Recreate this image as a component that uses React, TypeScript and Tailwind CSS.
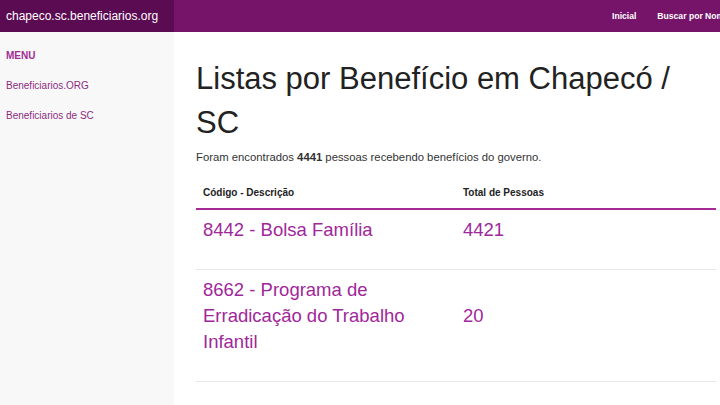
import React from "react";

const rows = [
  { label: "8442 - Bolsa Família", total: "4421" },
  { label: "8662 - Programa de Erradicação do Trabalho Infantil", total: "20" },
];

const App: React.FC = () => (
  <div className="h-[405px] w-[720px] overflow-hidden bg-white font-['Liberation_Sans',Arial,sans-serif]">
    <header className="flex h-8 bg-[#76146a] text-white">
      <div className="flex w-[174px] shrink-0 items-center bg-[#5b0b52] pl-[6px] text-[12px]">
        chapeco.sc.beneficiarios.org
      </div>
      <nav className="flex flex-1 items-center gap-[21px] overflow-hidden whitespace-nowrap pl-[438px] text-[8.6px] font-bold">
        <a>Inicial</a>
        <a>Buscar por Nome</a>
      </nav>
    </header>

    <div className="flex h-[373px]">
      <aside className="w-[174px] shrink-0 bg-[#f8f8f8] pl-[6px] pt-[18px] text-[10px]">
        <h3 className="h-[12px] font-bold leading-[12px] text-[#a12c94]">MENU</h3>
        <ul className="mt-[18px] flex flex-col gap-[18px] text-[#8d2c7f]">
          <li className="leading-[12px]">Beneficiarios.ORG</li>
          <li className="leading-[12px]">Beneficiarios de SC</li>
        </ul>
      </aside>

      <main className="w-[520px] pl-[22px] pt-[25px]">
        <h1 className="text-[31px] leading-[44px] text-[#222]">
          Listas por Benefício em Chapecó / SC
        </h1>
        <p className="mt-[5px] text-[11.3px] leading-[14px] text-[#333]">
          Foram encontrados <b>4441</b> pessoas recebendo benefícios do governo.
        </p>
        <table className="mt-[23px] w-[520px] table-fixed border-collapse">
          <thead>
            <tr className="border-b-2 border-[#a52a98] text-left text-[10px] font-bold text-[#222]">
              <th className="w-[260px] px-[7px] pb-[9px] pt-0 leading-[12px]">Código - Descrição</th>
              <th className="px-[7px] pb-[9px] pt-0 leading-[12px]">Total de Pessoas</th>
            </tr>
          </thead>
          <tbody>
            {rows.map((r) => (
              <tr key={r.total} className="border-b border-[#e8e8e8] text-[18.5px] leading-[26px] text-[#a0279a]">
                <td className="px-[7px] pb-[26px] pt-[7px] align-middle">{r.label}</td>
                <td className="px-[7px] pb-[26px] pt-[7px] align-middle">{r.total}</td>
              </tr>
            ))}
          </tbody>
        </table>
      </main>
    </div>
  </div>
);

export default App;
